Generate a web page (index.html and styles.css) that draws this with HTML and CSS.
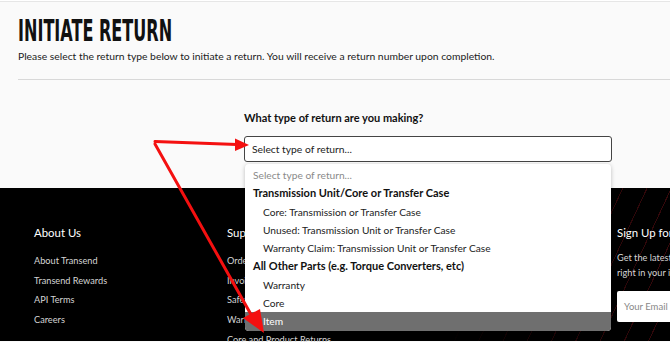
FILE: index.html
```html
<!DOCTYPE html>
<html lang="en">
<head>
<meta charset="utf-8">
<title>Initiate Return</title>
<link rel="stylesheet" href="styles.css">
</head>
<body>
<div class="topline"></div>
<main class="page">
  <h1 class="title">INITIATE RETURN</h1>
  <p class="intro">Please select the return type below to initiate a return. You will receive a return number upon completion.</p>
  <hr class="rule">
  <section class="form">
    <label class="label">What type of return are you making?</label>
    <div class="select-wrap">
      <div class="select">Select type of return...</div>
      <ul class="dropdown">
        <li class="opt placeholder">Select type of return...</li>
        <li class="opt group">Transmission Unit/Core or Transfer Case</li>
        <li class="opt sub">Core: Transmission or Transfer Case</li>
        <li class="opt sub">Unused: Transmission Unit or Transfer Case</li>
        <li class="opt sub">Warranty Claim: Transmission Unit or Transfer Case</li>
        <li class="opt group">All Other Parts (e.g. Torque Converters, etc)</li>
        <li class="opt sub">Warranty</li>
        <li class="opt sub">Core</li>
        <li class="opt sub active">Item</li>
      </ul>
    </div>
  </section>
</main>
<footer class="footer">
  <div class="fcol c1">
    <h3 class="fhead">About Us</h3>
    <a class="flink">About Transend</a>
    <a class="flink">Transend Rewards</a>
    <a class="flink">API Terms</a>
    <a class="flink">Careers</a>
  </div>
  <div class="fcol c2">
    <h3 class="fhead">Support</h3>
    <a class="flink">Order Status</a>
    <a class="flink">Invoices</a>
    <a class="flink">Safety Data Sheets</a>
    <a class="flink">Warranty</a>
    <a class="flink">Core and Product Returns</a>
  </div>
  <div class="fcol c3">
    <h3 class="fhead">Sign Up for Our Newsletter</h3>
    <p class="ftext">Get the latest news and offers<br>right in your inbox.</p>
    <div class="email">Your Email</div>
  </div>
</footer>
<svg class="arrows" width="670" height="342" viewBox="0 0 670 342">
  <line x1="155" y1="141.5" x2="237" y2="144.5" stroke="#f41010" stroke-width="3" stroke-linecap="round"/>
  <polygon points="235,138.5 249,145 235,151" fill="#f41010"/>
  <line x1="155" y1="144" x2="253" y2="318" stroke="#f41010" stroke-width="3" stroke-linecap="round"/>
  <polygon points="243,318 260,309 264,333" fill="#f41010"/>
</svg>
</body>
</html>
```
FILE: styles.css
```css
* { box-sizing: border-box; }
html, body { margin: 0; padding: 0; }
body {
  width: 670px;
  height: 342px;
  overflow: hidden;
  background: #fafafa;
  font-family: Lato, "Open Sans", sans-serif;
  color: #1a1a1a;
  position: relative;
}
.topline { height: 2px; border-bottom: 1px solid #e6e6e6; background: #fff; }
.page { padding: 12px 0 0 18px; height: 186px; }
.title {
  margin: 0;
  font-family: "DejaVu Sans", sans-serif;
  font-weight: bold;
  font-size: 30px;
  line-height: 34px;
  transform: scaleX(0.535);
  transform-origin: left center;
  white-space: nowrap;
  color: #111;
}
.intro { margin: 0; font-size: 10.35px; line-height: 16px; color: #222; white-space: nowrap; }
.rule { margin: 15px 0 0; border: 0; border-top: 1px solid #d8d8d8; }
.form { margin: 30px 0 0 226px; width: 368px; }
.label { display: block; font-weight: bold; font-size: 11px; line-height: 16px; color: #111; }
.select-wrap { position: relative; margin-top: 10px; }
.select {
  height: 26px;
  border: 1px solid #444;
  border-radius: 3px;
  background: #fff;
  padding: 0 7px;
  font-size: 10.3px;
  line-height: 24px;
  color: #222;
}
.dropdown {
  position: absolute;
  z-index: 5;
  left: 1px;
  top: 28px;
  width: 366px;
  margin: 0;
  padding: 2px 0 0;
  list-style: none;
  background: #fff;
  border-radius: 4px;
  box-shadow: 0 1px 4px rgba(0,0,0,0.25);
  overflow: hidden;
}
.opt { height: 18.3px; line-height: 18.3px; font-size: 10.2px; padding-left: 8px; white-space: nowrap; color: #222; }
.opt.placeholder { color: #8a8a8a; }
.opt.group { font-weight: bold; font-size: 11px; color: #111; }
.opt.sub { padding-left: 18px; }
.opt.active { background: #6f6f6f; color: #fff; height: 19px; line-height: 19px; }
.footer {
  height: 153px;
  background:
    repeating-linear-gradient(115deg, transparent 0 14px, rgba(140,20,28,0.45) 14px 15px, transparent 15px 22px),
    #000;
  display: grid;
  grid-template-columns: 193px 390px 1fr;
  padding: 36px 0 0 34px;
  position: relative;
}
.footer::before {
  content: "";
  position: absolute;
  left: 0; top: 0; right: 0; bottom: 0;
  background: linear-gradient(90deg, #000 0, #000 440px, rgba(0,0,0,0.5) 560px, rgba(0,0,0,0.15) 670px);
}
.fcol { position: relative; display: flex; flex-direction: column; min-width: 0; }
.fhead { margin: 0 0 9px; font-weight: normal; font-size: 11.4px; line-height: 18px; color: #fff; white-space: nowrap; }
.flink { font-size: 9.2px; line-height: 19.7px; color: #d4d4d4; white-space: nowrap; }
.ftext { margin: 0; font-size: 9.2px; line-height: 14.5px; color: #d4d4d4; white-space: nowrap; }
.email {
  margin-top: 11px;
  height: 31px;
  width: 80px;
  background: #fff;
  border-radius: 2px 0 0 2px;
  padding-left: 7px;
  font-size: 9.5px;
  line-height: 31px;
  color: #888;
}
.arrows { position: absolute; left: 0; top: 0; z-index: 10; pointer-events: none; }
```
